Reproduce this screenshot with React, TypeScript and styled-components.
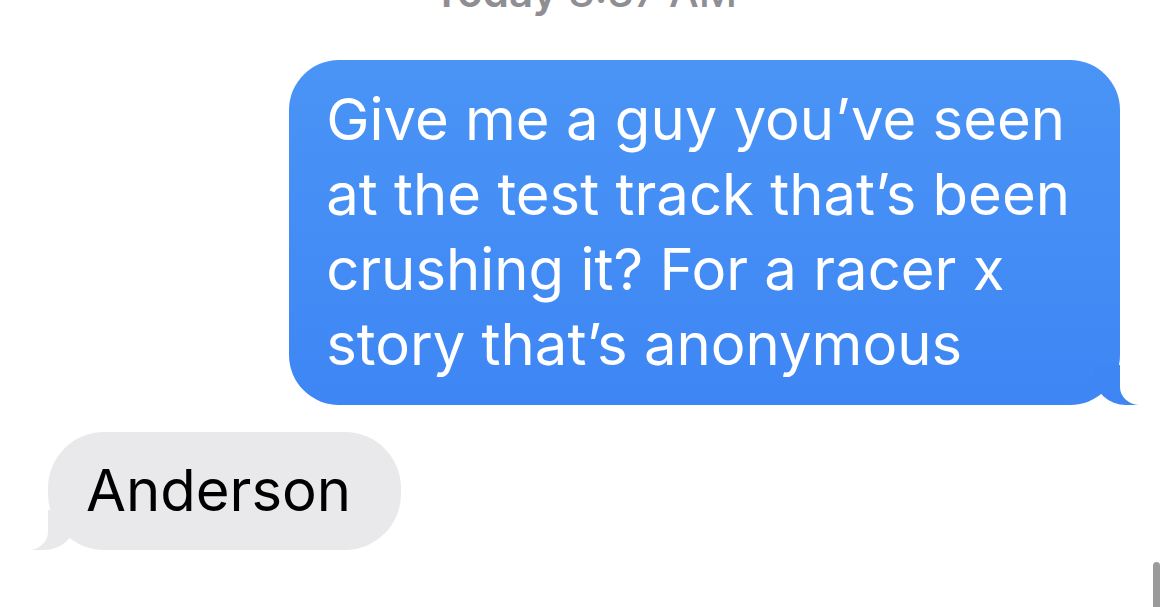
import React from 'react';
import styled, { createGlobalStyle } from 'styled-components';

const GlobalStyle = createGlobalStyle`
    html, body {
        margin: 0;
        padding: 0;
        background: #ffffff;
        overflow: hidden;
    }
    body {
        font-family: Inter, "Noto Sans", "Liberation Sans", sans-serif;
        -webkit-font-smoothing: antialiased;
    }
`;

const App: React.FC = () => {
    return (
        <Screen>
            <GlobalStyle />
            <Stamp>
                <b>Today</b> 8:37 AM
            </Stamp>
            <Thread>
                <Bubble mine>
                    Give me a guy you’ve seen<br />
                    at the test track that’s been<br />
                    crushing it? For a racer x<br />
                    story that’s anonymous
                </Bubble>
                <Bubble>Anderson</Bubble>
            </Thread>
            <ScrollThumb />
        </Screen>
    );
};

export default App;

const Screen = styled.div`
    position: relative;
    width: 1170px;
    height: 607px;
    overflow: hidden;
    background: #ffffff;
`;

// only the bottom edge of the timestamp is still on screen
const Stamp = styled.div`
    margin-top: -32px;
    text-align: center;
    font-size: 42px;
    line-height: 48px;
    color: #8e8e93;
    font-weight: 500;

    b {
        font-weight: 600;
    }
`;

const Thread = styled.div`
    display: flex;
    flex-direction: column;
    gap: 27px;
    padding: 44px 50px 0 48px;
`;

const Bubble = styled.div<{ mine?: boolean }>`
    position: relative;
    align-self: ${({ mine }) => (mine ? 'flex-end' : 'flex-start')};
    padding: ${({ mine }) => (mine ? '22px 50px 23px 37px' : '21px 50px 22px 38px')};
    border-radius: ${({ mine }) => (mine ? '50px' : '56px')};
    background: ${({ mine }) =>
        mine ? 'linear-gradient(180deg, #4a94f6 0%, #3e86f4 100%)' : '#e9e9eb'};
    color: ${({ mine }) => (mine ? '#ffffff' : '#000000')};
    font-size: 58px;
    line-height: 75px;
    white-space: nowrap;

    &::before {
        content: '';
        position: absolute;
        bottom: 0;
        ${({ mine }) => (mine ? 'right: -18px;' : 'left: -16px;')}
        width: 44px;
        height: 40px;
        background: ${({ mine }) => (mine ? '#3e86f4' : '#e9e9eb')};
        ${({ mine }) =>
            mine ? 'border-bottom-left-radius: 32px 30px;' : 'border-bottom-right-radius: 32px 30px;'}
    }

    &::after {
        content: '';
        position: absolute;
        bottom: 0;
        ${({ mine }) => (mine ? 'right: -34px;' : 'left: -34px;')}
        width: 34px;
        height: 42px;
        background: #ffffff;
        ${({ mine }) =>
            mine ? 'border-bottom-left-radius: 20px 18px;' : 'border-bottom-right-radius: 20px 18px;'}
    }
`;

const ScrollThumb = styled.div`
    position: absolute;
    right: 10px;
    top: 562px;
    width: 7px;
    height: 60px;
    border-radius: 4px;
    background: #9b9b9b;
`;
